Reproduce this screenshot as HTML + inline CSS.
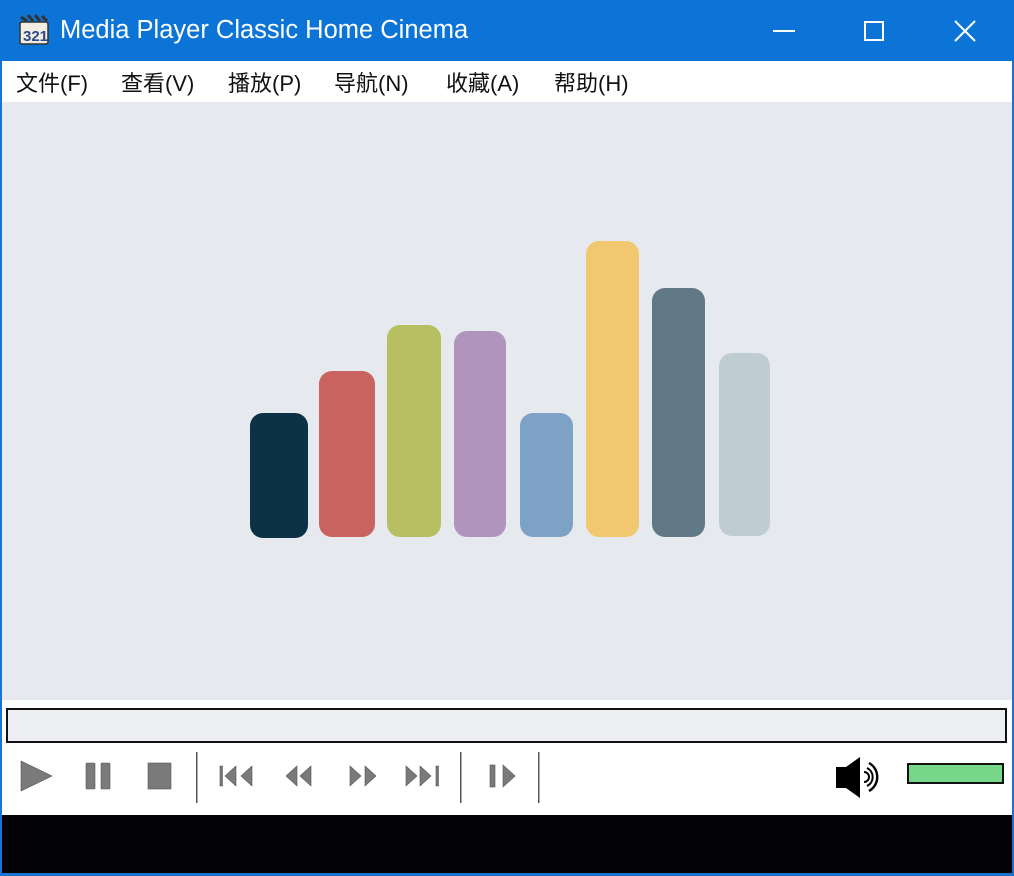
<!DOCTYPE html>
<html><head><meta charset="utf-8"><style>
*{margin:0;padding:0;box-sizing:border-box}
body{width:1014px;height:876px;overflow:hidden;background:#1a73d1;position:relative;font-family:"Liberation Sans","Noto Sans CJK SC",sans-serif}
.title{position:absolute;left:0;top:0;width:1014px;height:61px;background:#0b74d6}
.title .t{position:absolute;left:60px;top:16px;color:#fff;font-size:25.5px;font-family:"Liberation Sans",sans-serif}
.menu{position:absolute;left:2px;top:61px;width:1010px;height:41px;background:#fff;font-size:22px;color:#111}
.menu span{position:absolute;top:5px}
.video{position:absolute;left:2px;top:102px;width:1010px;height:598px;background:#e6eaee}
.bar{position:absolute;border-radius:13px}
.ctrl{position:absolute;left:2px;top:700px;width:1010px;height:115px;background:#fff}
.seek{position:absolute;left:4px;top:8px;width:1001px;height:35px;border:2px solid #111;background:#eeeff2}
.black{position:absolute;left:2px;top:815px;width:1010px;height:58px;background:#030305}
</style></head><body>
<div class="title">
<svg style="position:absolute;left:18px;top:14px" width="32" height="32" viewBox="0 0 32 32">
<rect x="2" y="8" width="28" height="22" rx="2" fill="#f3ece0" stroke="#333" stroke-width="1.5"/>
<path d="M3 3l6 4M10 1l5 6M17 1l5 6M24 2l5 5" stroke="#333" stroke-width="3"/>
<text x="5" y="27" font-size="15" font-weight="bold" fill="#2a4a8a" font-family="Liberation Sans">321</text>
</svg>
<div class="t">Media Player Classic Home Cinema</div>
<div style="position:absolute;left:773px;top:30px;width:22px;height:2px;background:#fff"></div>
<div style="position:absolute;left:864px;top:21px;width:20px;height:20px;border:2px solid #fff"></div>
<svg style="position:absolute;left:954px;top:20px" width="22" height="22"><path d="M1 1L21 21M21 1L1 21" stroke="#fff" stroke-width="2"/></svg>
</div>
<div class="menu">
<span style="left:14px">文件(F)</span><span style="left:119px">查看(V)</span><span style="left:226px">播放(P)</span><span style="left:332px">导航(N)</span><span style="left:444px">收藏(A)</span><span style="left:552px">帮助(H)</span>
</div>
<div class="video">
<div class="bar" style="left:248px;top:311px;width:58px;height:125px;background:#0c3246"></div>
<div class="bar" style="left:317px;top:269px;width:56px;height:166px;background:#c9635f"></div>
<div class="bar" style="left:385px;top:223px;width:54px;height:212px;background:#b7bf62"></div>
<div class="bar" style="left:452px;top:229px;width:52px;height:206px;background:#b094be"></div>
<div class="bar" style="left:518px;top:311px;width:53px;height:124px;background:#7ea2c5"></div>
<div class="bar" style="left:584px;top:139px;width:53px;height:296px;background:#f1c76f"></div>
<div class="bar" style="left:650px;top:186px;width:53px;height:249px;background:#617886"></div>
<div class="bar" style="left:717px;top:251px;width:51px;height:183px;background:#bfcdd3"></div>
</div>
<div class="ctrl">
<div class="seek"></div>
</div>
<svg style="position:absolute;left:0;top:0" width="1014" height="876">
<g fill="#7a7a7a" stroke="#555" stroke-width="0.6">
<path d="M21 761L52 776L21 791Z"/>
<rect x="86" y="763" width="9" height="26" rx="1"/><rect x="101" y="763" width="9" height="26" rx="1"/>
<rect x="148" y="763" width="23" height="26"/>
<rect x="220" y="766" width="2.5" height="20"/><path d="M236 766L225 776L236 786Z M252 766L241 776L252 786Z"/>
<path d="M297 766L286 776L297 786Z M311 766L300 776L311 786Z"/>
<path d="M350 766L361 776L350 786Z M365 766L376 776L365 786Z"/>
<path d="M406 766L417 776L406 786Z M420 766L431 776L420 786Z"/><rect x="436" y="766" width="2.5" height="20"/>
<rect x="490" y="765" width="5" height="22"/><path d="M503 765L515 776L503 787Z"/>
</g>
<g fill="#555"><rect x="196" y="752" width="1.5" height="51"/><rect x="460" y="752" width="1.5" height="51"/><rect x="538" y="752" width="1.5" height="51"/></g>
<path d="M836 767H846L860 757V798L846 788H836Z" fill="#000"/>
<path d="M864 772a5 5 0 0 1 0 10" stroke="#000" stroke-width="2" fill="none"/>
<path d="M867 768a10 10 0 0 1 0 18" stroke="#000" stroke-width="2" fill="none"/>
<path d="M869 763a16 16 0 0 1 0 28" stroke="#000" stroke-width="2.4" fill="none"/>
<rect x="908" y="764" width="95" height="19" fill="#76d68a" stroke="#111" stroke-width="2"/>
</svg>
<div class="black"></div>
</body></html>
